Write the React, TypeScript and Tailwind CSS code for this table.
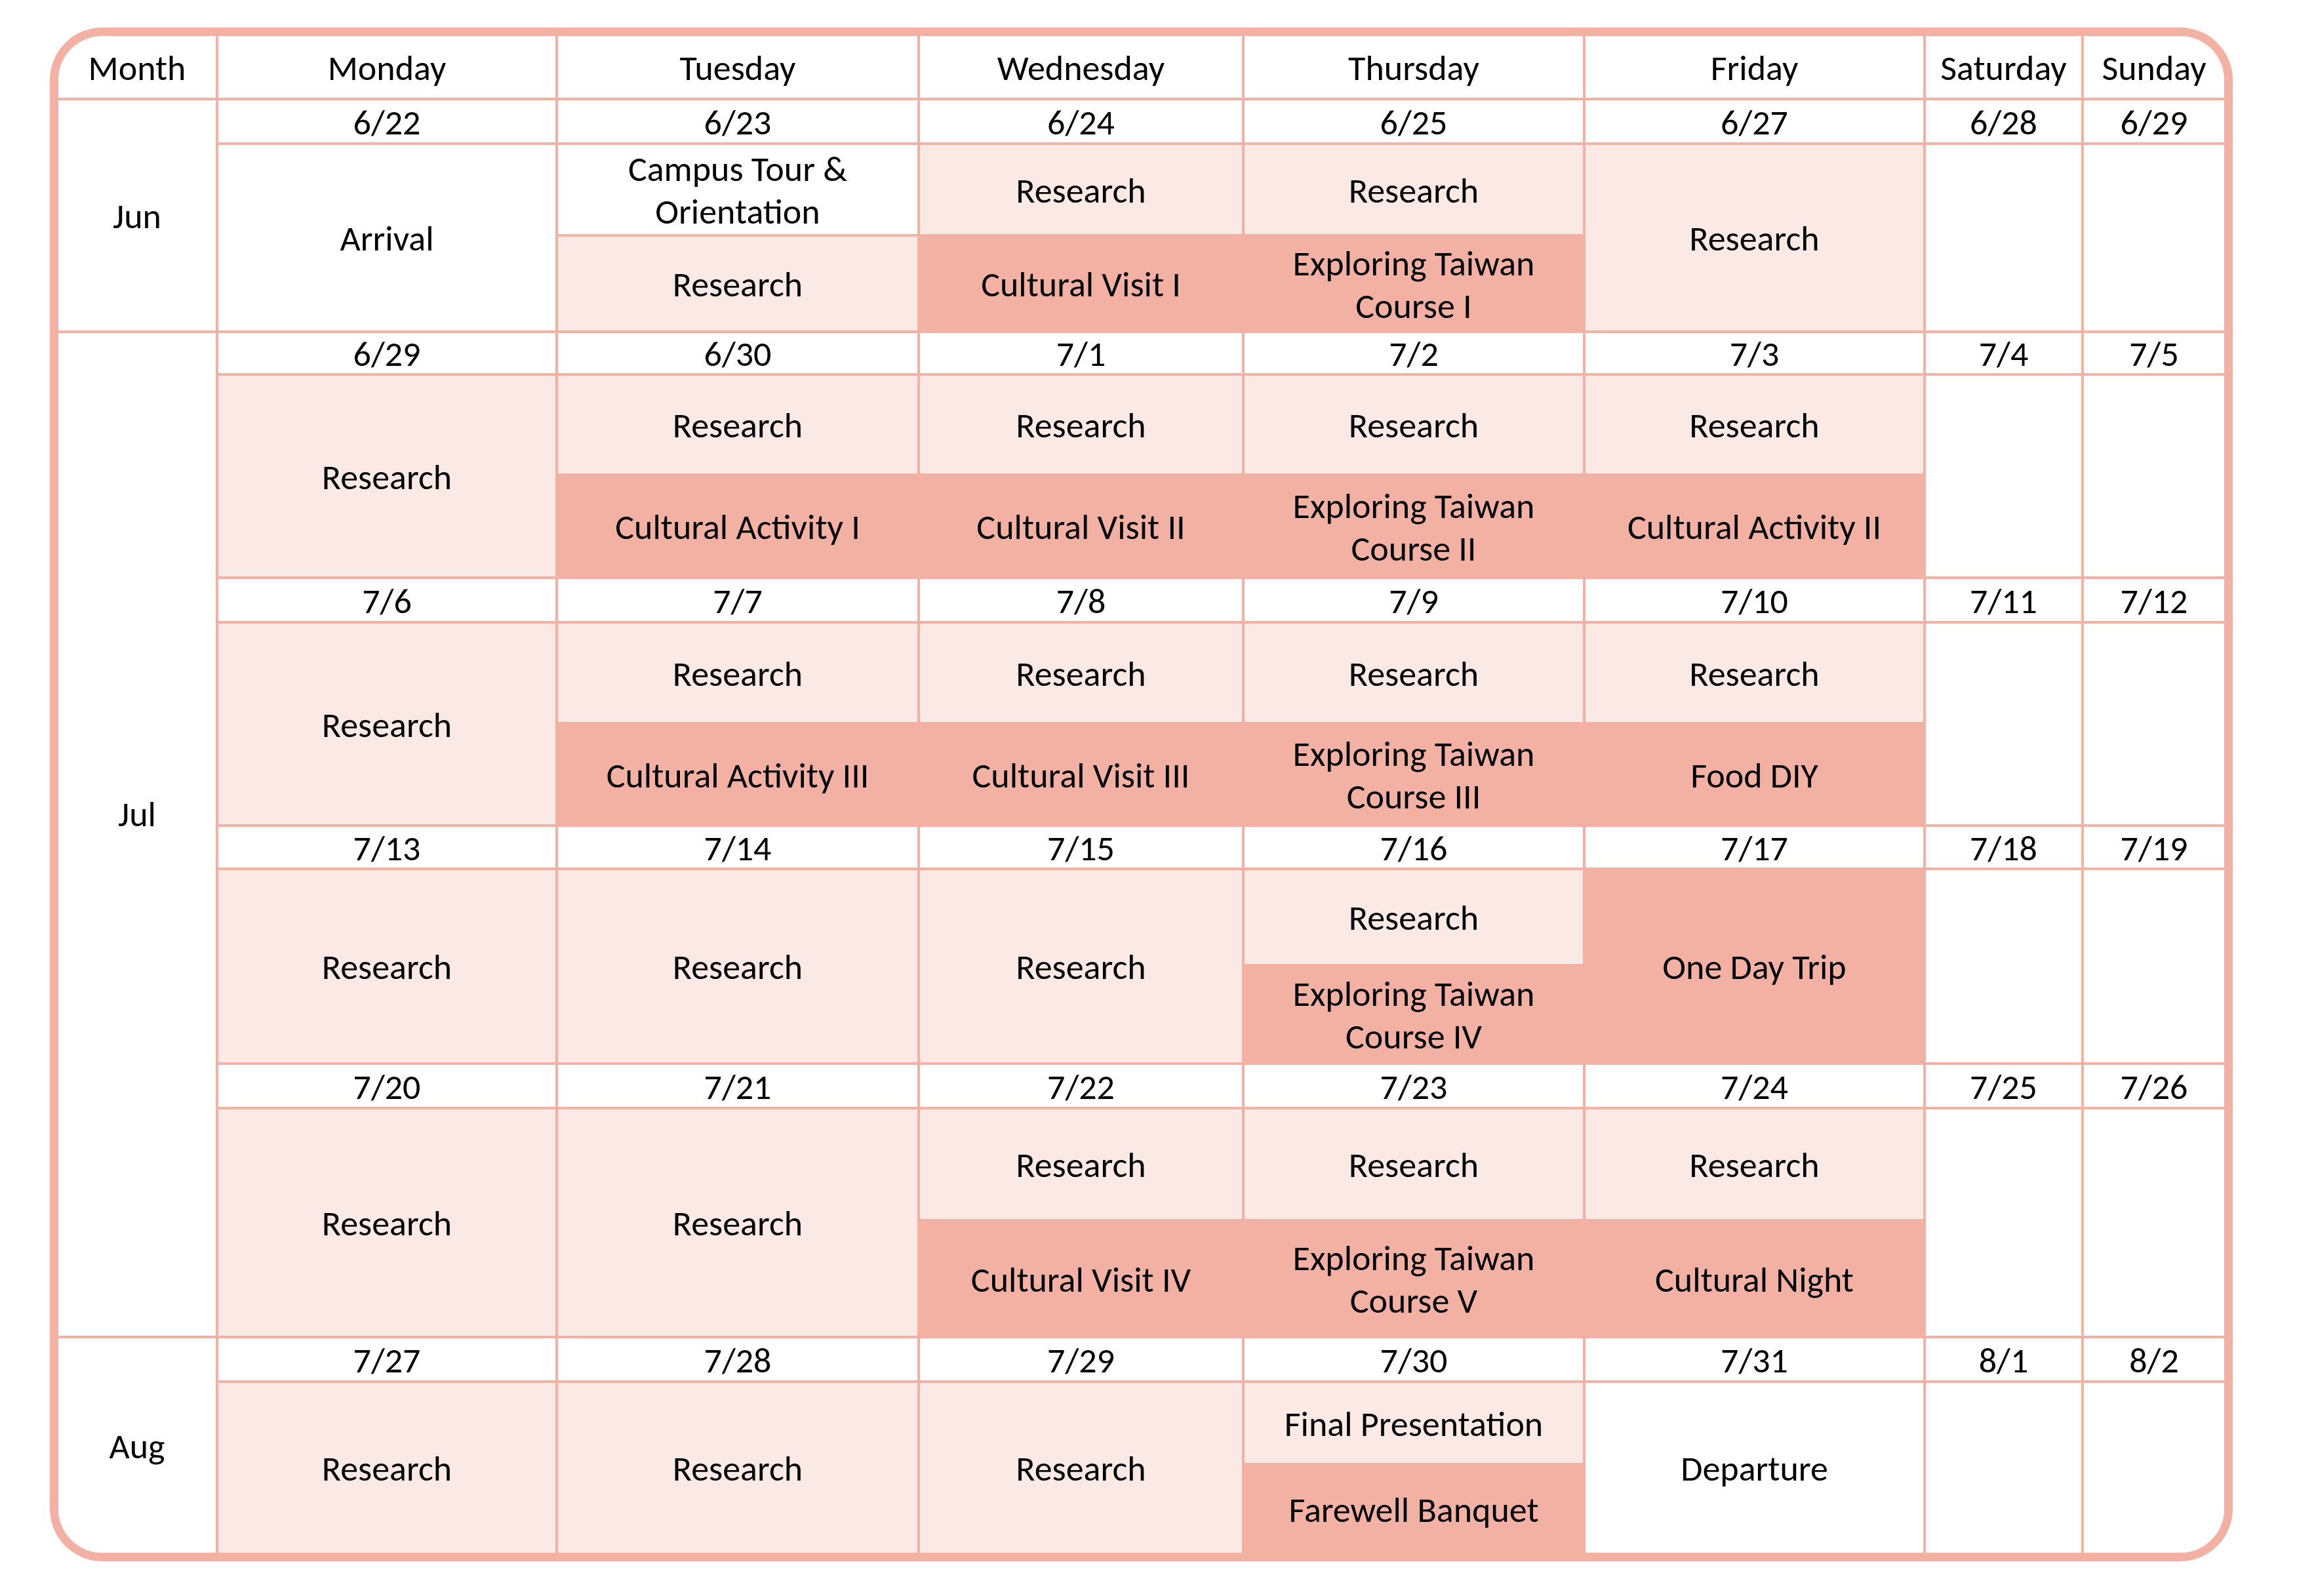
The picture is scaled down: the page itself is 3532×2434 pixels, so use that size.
import React from "react";

type Kind = "w" | "l" | "d";
const BG: Record<Kind, string> = {
  w: "bg-white",
  l: "bg-[#fbe9e5]",
  d: "bg-[#f3b1a4]",
};

type Col =
  | { full: [string, Kind] }
  | { top: [string, Kind]; bottom: [string, Kind] };

type Week = {
  month?: { label: string; cls: string };
  dates: string[];
  cols: Col[];
};

const R: [string, Kind] = ["Research", "l"];
const E: [string, Kind] = ["", "w"];

const weeks: Week[] = [
  {
    month: { label: "Jun", cls: "row-span-3" },
    dates: ["6/22", "6/23", "6/24", "6/25", "6/27", "6/28", "6/29"],
    cols: [
      { full: ["Arrival", "w"] },
      { top: ["Campus Tour &\nOrientation", "w"], bottom: R },
      { top: R, bottom: ["Cultural Visit I", "d"] },
      { top: R, bottom: ["Exploring Taiwan\nCourse I", "d"] },
      { full: R },
      { full: E },
      { full: E },
    ],
  },
  {
    month: { label: "Jul", cls: "row-span-12 pb-[64px]" },
    dates: ["6/29", "6/30", "7/1", "7/2", "7/3", "7/4", "7/5"],
    cols: [
      { full: R },
      { top: R, bottom: ["Cultural Activity I", "d"] },
      { top: R, bottom: ["Cultural Visit II", "d"] },
      { top: R, bottom: ["Exploring Taiwan\nCourse II", "d"] },
      { top: R, bottom: ["Cultural Activity II", "d"] },
      { full: E },
      { full: E },
    ],
  },
  {
    dates: ["7/6", "7/7", "7/8", "7/9", "7/10", "7/11", "7/12"],
    cols: [
      { full: R },
      { top: R, bottom: ["Cultural Activity III", "d"] },
      { top: R, bottom: ["Cultural Visit III", "d"] },
      { top: R, bottom: ["Exploring Taiwan\nCourse III", "d"] },
      { top: R, bottom: ["Food DIY", "d"] },
      { full: E },
      { full: E },
    ],
  },
  {
    dates: ["7/13", "7/14", "7/15", "7/16", "7/17", "7/18", "7/19"],
    cols: [
      { full: R },
      { full: R },
      { full: R },
      { top: R, bottom: ["Exploring Taiwan\nCourse IV", "d"] },
      { full: ["One Day Trip", "d"] },
      { full: E },
      { full: E },
    ],
  },
  {
    dates: ["7/20", "7/21", "7/22", "7/23", "7/24", "7/25", "7/26"],
    cols: [
      { full: R },
      { full: R },
      { top: R, bottom: ["Cultural Visit IV", "d"] },
      { top: R, bottom: ["Exploring Taiwan\nCourse V", "d"] },
      { top: R, bottom: ["Cultural Night", "d"] },
      { full: E },
      { full: E },
    ],
  },
  {
    month: { label: "Aug", cls: "row-span-3" },
    dates: ["7/27", "7/28", "7/29", "7/30", "7/31", "8/1", "8/2"],
    cols: [
      { full: R },
      { full: R },
      { full: R },
      { top: ["Final Presentation", "l"], bottom: ["Farewell Banquet", "d"] },
      { full: ["Departure", "w"] },
      { full: E },
      { full: E },
    ],
  },
];

const headers = ["Month", "Monday", "Tuesday", "Wednesday", "Thursday", "Friday", "Saturday", "Sunday"];

function Cell({ text, kind, cls }: { text: string; kind: Kind; cls?: string }) {
  return (
    <div
      className={`${BG[kind]} ${cls ?? ""} flex items-center justify-center pt-[4px] text-center whitespace-pre-line`}
    >
      {text}
    </div>
  );
}

export default function App() {
  const items: React.ReactNode[] = [];
  headers.forEach((h, i) => items.push(<Cell key={`h${i}`} text={h} kind="w" />));
  weeks.forEach((w, wi) => {
    if (w.month) {
      items.push(<Cell key={`m${wi}`} text={w.month.label} kind="w" cls={w.month.cls} />);
    }
    w.dates.forEach((d, di) => items.push(<Cell key={`d${wi}-${di}`} text={d} kind="w" />));
    w.cols.forEach((c, ci) => {
      if ("full" in c) {
        items.push(<Cell key={`f${wi}-${ci}`} text={c.full[0]} kind={c.full[1]} cls="row-span-2" />);
      } else {
        items.push(<Cell key={`t${wi}-${ci}`} text={c.top[0]} kind={c.top[1]} />);
      }
    });
    w.cols.forEach((c, ci) => {
      if (!("full" in c)) {
        items.push(<Cell key={`b${wi}-${ci}`} text={c.bottom[0]} kind={c.bottom[1]} />);
      }
    });
  });

  return (
    <div className="min-h-screen w-full bg-white pl-[76px] pt-[42px] pb-[53px]">
      <div className="w-[3329px] h-[2339px] rounded-[80px] border-[13px] border-[#f3b1a4] overflow-hidden bg-[#f3b1a4]">
        <div
          className="grid h-full w-full gap-[4px] bg-[#f3b1a4] grid-cols-[240px_514px_548px_491px_516px_515px_237px_214px] grid-rows-[94px_64px_136px_143px_61px_149px_153px_64px_150px_152px_62px_143px_146px_64px_167px_174px_64px_122px_133px] text-[54px] leading-[65px] text-black"
          style={{ fontFamily: "Carlito, Lato, 'Open Sans', sans-serif" }}
        >
          {items}
        </div>
      </div>
    </div>
  );
}
